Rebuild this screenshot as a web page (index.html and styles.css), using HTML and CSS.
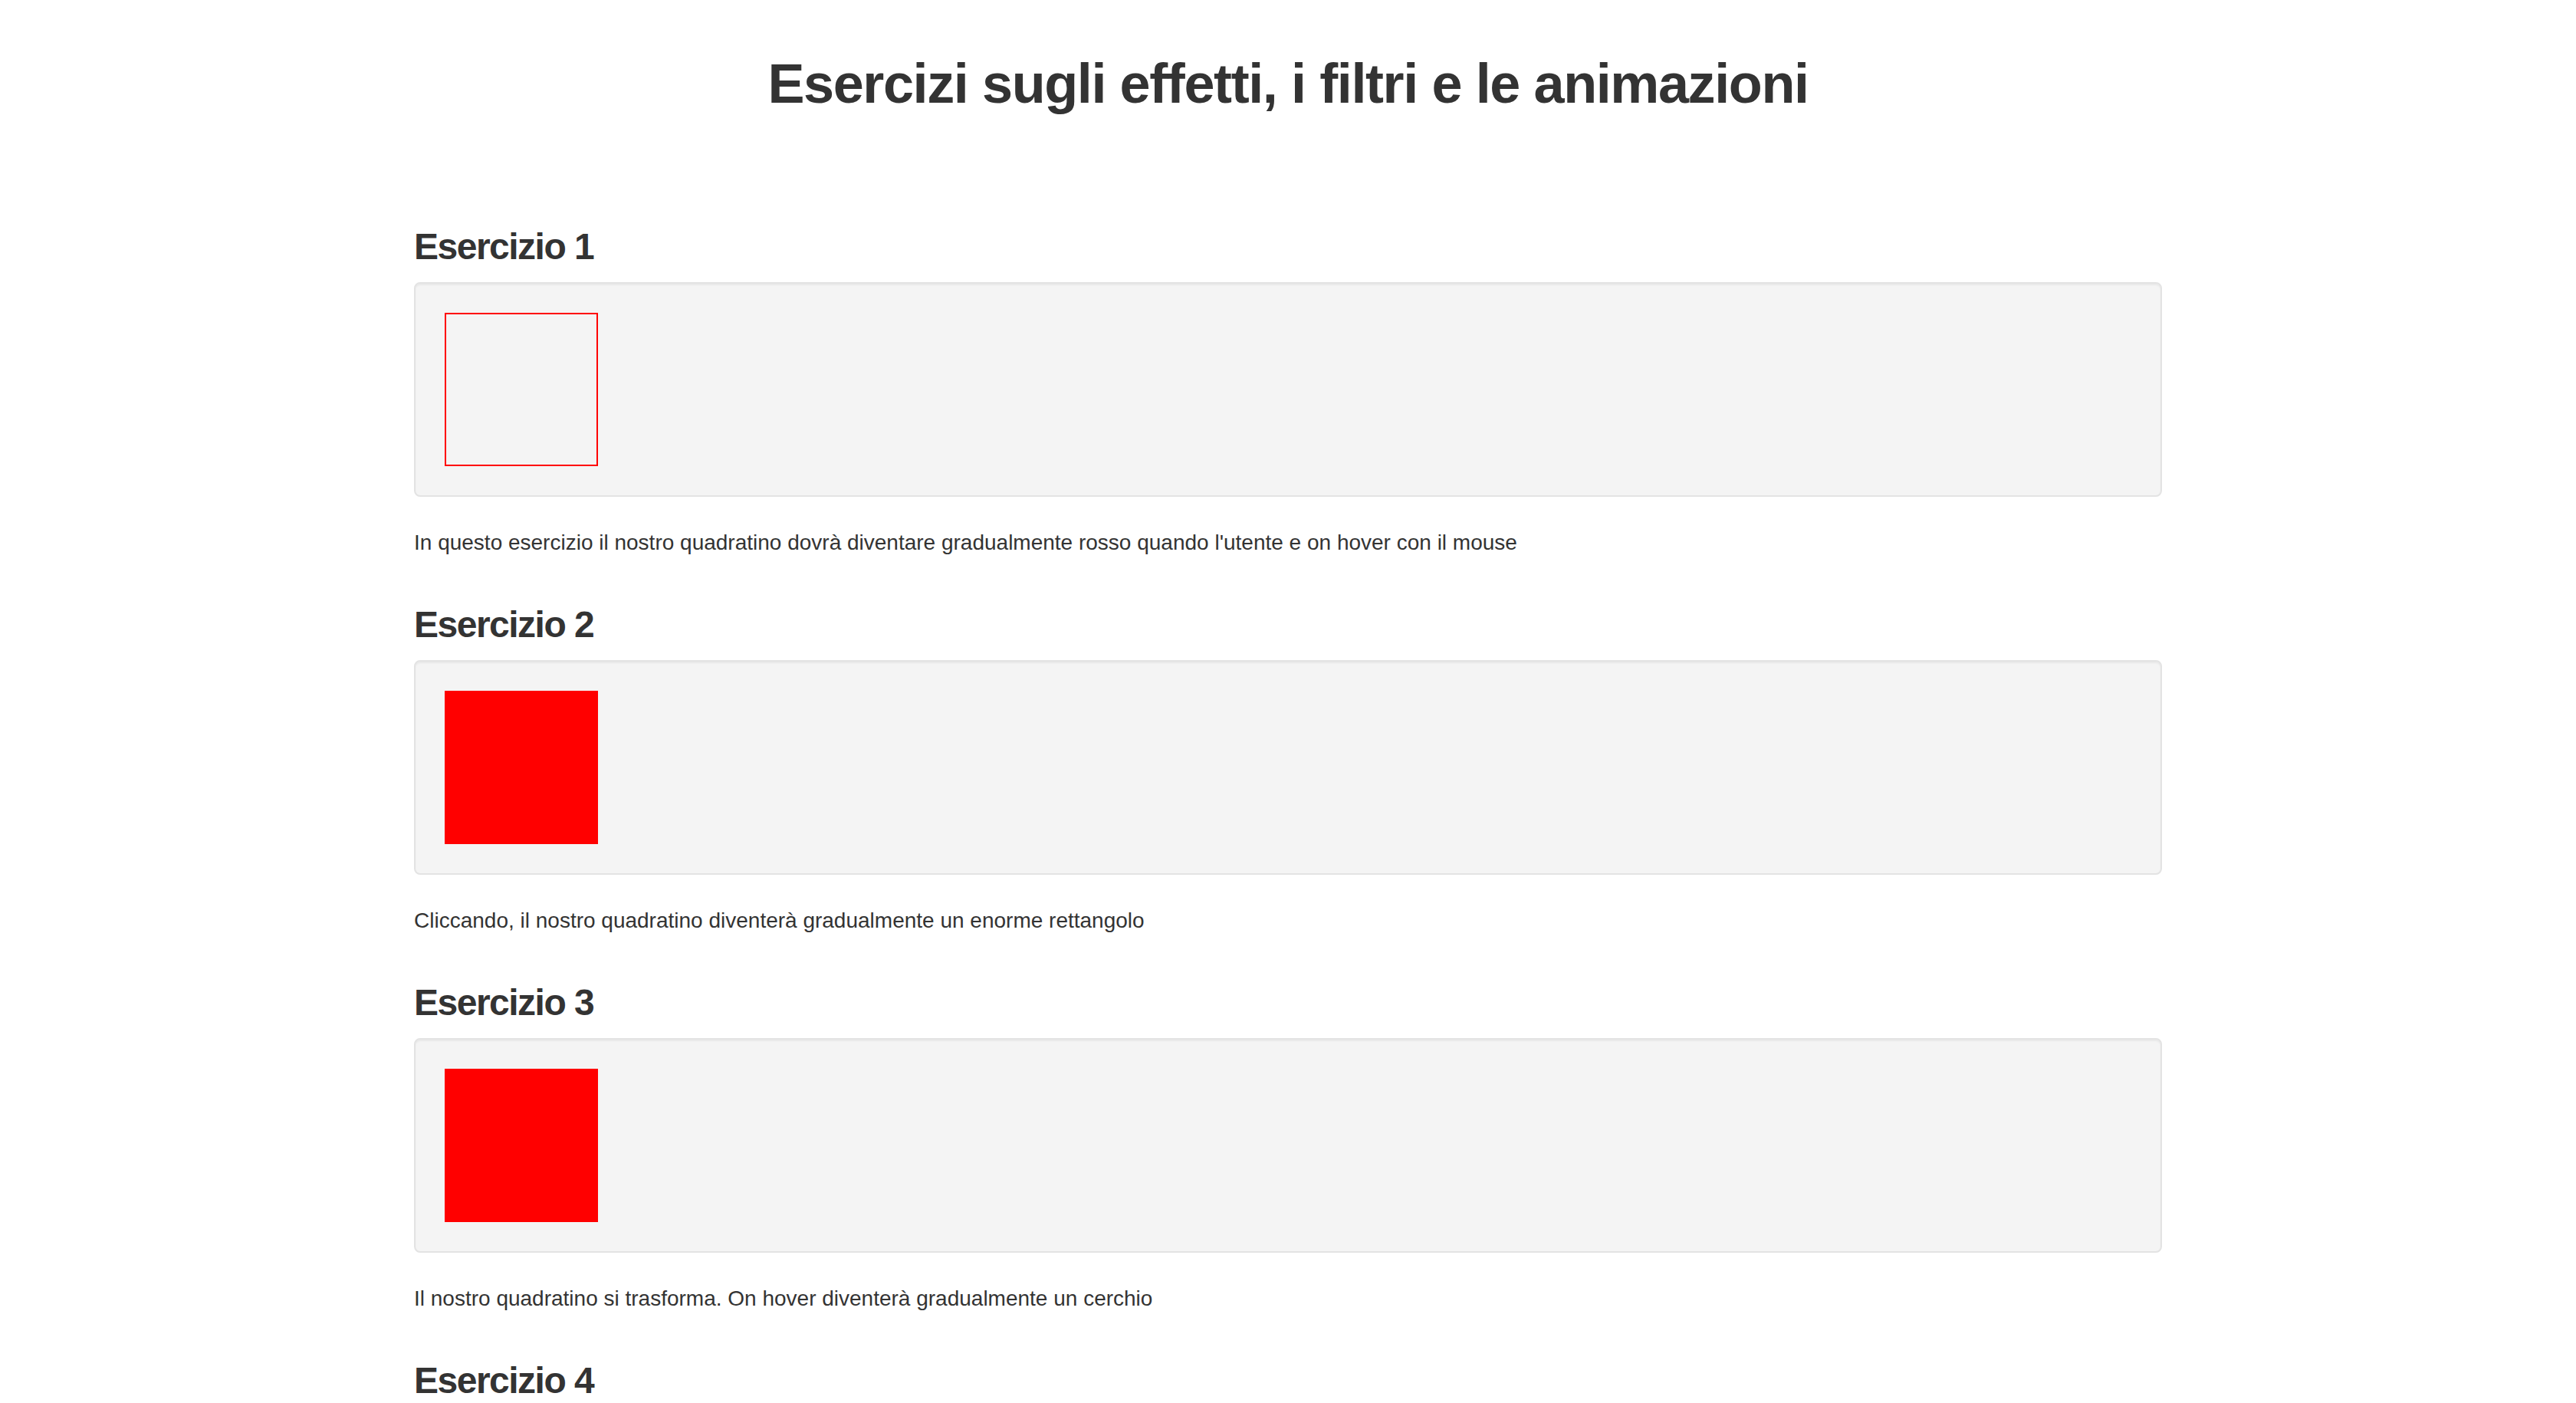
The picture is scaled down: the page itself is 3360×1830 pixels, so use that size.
FILE: index.html
```html
<!DOCTYPE html>
<html lang="it">
<head>
<meta charset="utf-8">
<title>Esercizi sugli effetti, i filtri e le animazioni</title>
<link rel="stylesheet" href="styles.css">
</head>
<body>
<div class="container">
  <h1 class="page-title">Esercizi sugli effetti, i filtri e le animazioni</h1>
  <div class="exercises">
    <section class="exercise">
      <h3>Esercizio 1</h3>
      <div class="well"><div class="box box-outline"></div></div>
      <p>In questo esercizio il nostro quadratino dovrà diventare gradualmente rosso quando l'utente e on hover con il mouse</p>
    </section>
    <section class="exercise">
      <h3>Esercizio 2</h3>
      <div class="well"><div class="box box-red"></div></div>
      <p>Cliccando, il nostro quadratino diventerà gradualmente un enorme rettangolo</p>
    </section>
    <section class="exercise">
      <h3>Esercizio 3</h3>
      <div class="well"><div class="box box-red"></div></div>
      <p>Il nostro quadratino si trasforma. On hover diventerà gradualmente un cerchio</p>
    </section>
    <section class="exercise">
      <h3>Esercizio 4</h3>
      <div class="well"><div class="box box-red"></div></div>
      <p>&nbsp;</p>
    </section>
  </div>
</div>
</body>
</html>
```
FILE: styles.css
```css
html, body {
  margin: 0;
  padding: 0;
  background: #fff;
}
body {
  font-family: "Liberation Sans", Arial, Helvetica, sans-serif;
  font-size: 28px;
  line-height: 40px;
  color: #333;
}
.container {
  width: 2280px;
  margin: 0 auto;
}
.page-title {
  margin: 70px 0 0;
  font-size: 72px;
  line-height: 79px;
  font-weight: 700;
  letter-spacing: -1.4px;
  text-align: center;
}
.exercises {
  padding-top: 106px;
}
.exercise h3 {
  margin: 40px 0 20px;
  font-size: 48px;
  line-height: 53px;
  font-weight: 700;
  letter-spacing: -1.5px;
}
.well {
  min-height: 40px;
  padding: 38px;
  margin-bottom: 40px;
  background: #f4f4f4;
  border: 2px solid #e3e3e3;
  border-radius: 8px;
  box-shadow: inset 0 2px 2px rgba(0, 0, 0, 0.05);
}
.box {
  width: 200px;
  height: 200px;
  box-sizing: border-box;
}
.box-outline {
  border: 2px solid #ff0000;
}
.box-red {
  background: #ff0000;
}
.exercise p {
  margin: 0 0 60px;
}
```
